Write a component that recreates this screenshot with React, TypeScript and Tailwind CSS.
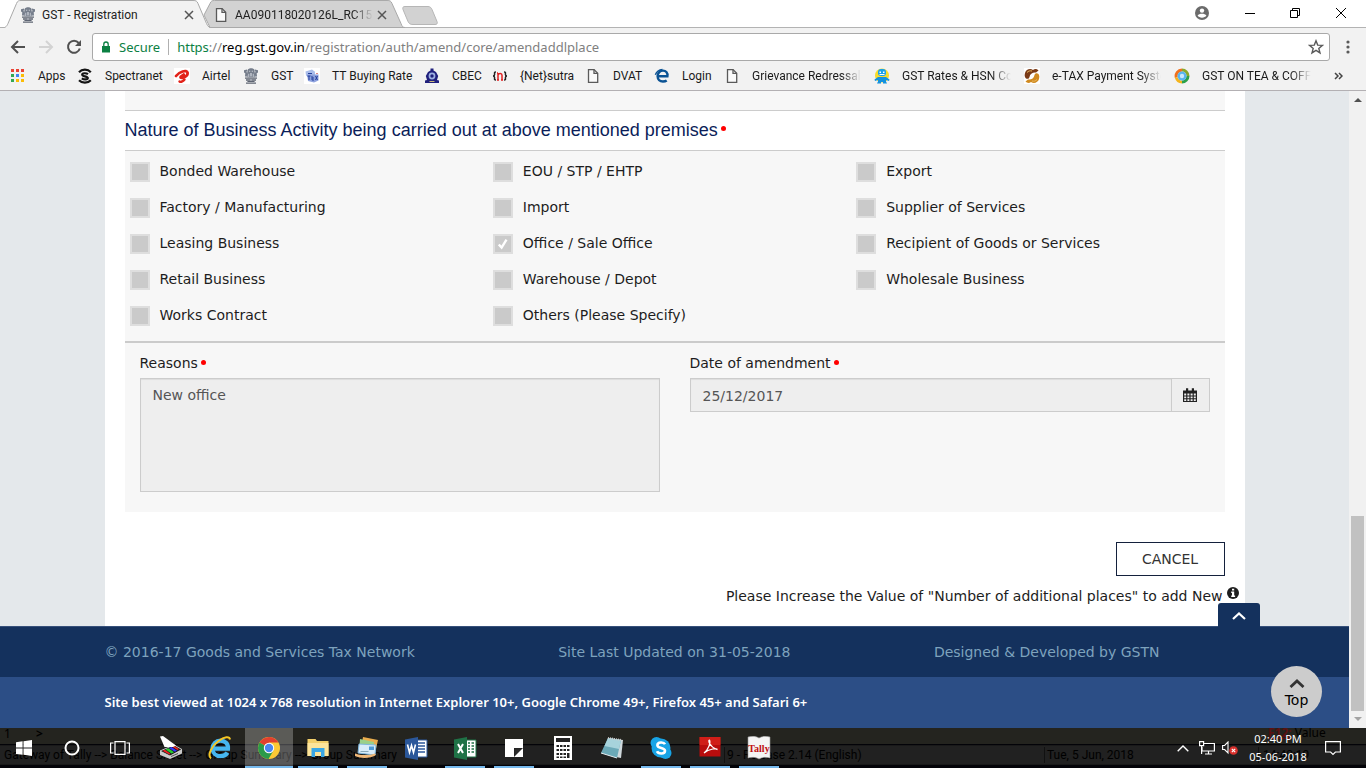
import type { ReactNode } from "react";

const Doc = () => (
  <svg viewBox="0 0 16 16" className="size-4 shrink-0" fill="none" stroke="#5a5a5a" strokeWidth="1.3">
    <path d="M3.5 1.6h5.6l3.6 3.6v9.2H3.5z" fill="#fafafa" />
    <path d="M9 1.6v3.8h3.7" />
  </svg>
);

const Emblem = () => (
  <svg viewBox="0 0 16 16" className="size-4 shrink-0" fill="#757d8b">
    <path d="M5 1.2 7 .3h2.2l2 .9.5 1.6-.6 1.4 1 2-.4 3H4.4L4 6.3l1-2-.7-1.4z" />
    <path d="M1 2.2l3-.8.2 2L5 5 3.4 9 2 8.2l.3-3L1 4.5zM15 2.2l-3-.8-.2 2L11 5l1.6 4 1.4-.8-.3-3 1.3-.7z" />
    <path d="M2 9.4h12v1.4H2zM3 11.2h10v1.6H3zM4.4 13.1h7.2v1H4.4zM3 14.4h10v1.4H3z" fill="#5d6472" />
    <path d="M6.2 2.7h1v1h-1zM8.8 2.7h1v1h-1zM7.4 5h1.2v3.4H7.4zM5.4 5.8h.8V9h-.8zM9.8 5.8h.8V9h-.8zM3 3.4h.8v.8H3zM12.2 3.4h.8v.8h-.8zM7.3 11.5h1.4v1H7.3z" fill="#d6dae2" />
  </svg>
);

const Apps = () => (
  <svg viewBox="0 0 16 16" className="size-4 shrink-0">
    <path d="M1 1h3v3H1zM6 1h3v3H6zM11 1h3v3h-3z" fill="#ea4335" />
    <path d="M1 6h3v3H1zM1 11h3v3H1z" fill="#34a853" />
    <path d="M6 6h3v3H6z" fill="#4285f4" />
    <path d="M11 6h3v3h-3zM6 11h3v3H6zM11 11h3v3h-3z" fill="#fbbc05" />
  </svg>
);

const Spectranet = () => (
  <svg viewBox="0 0 16 16" className="size-4 shrink-0" fill="none" stroke="#151515" strokeWidth="2.2">
    <path d="M2 4.2C5 .8 10.800.8 13.800 4.200M13.800 12.200c-3 3.200-8.800 3.200-11.800 0" />
    <path d="M11 6.200C9 4.700 5.200 5 5.200 6.700S10.800 8.300 10.800 10s-3.800 1.900-6 .3" strokeWidth="2.200" />
  </svg>
);

const Airtel = () => (
  <svg viewBox="0 0 16 16" className="size-4 shrink-0" fill="none" stroke="#e2231a" strokeLinecap="round">
    <path d="M0 0h16v16H0z" fill="#fff" stroke="none" />
    <path d="M2 8C5 4 12.800 1 13.600 4.800 14.200 9 6.500 11 6.500 9.200 6.600 8 9 7.800 9.800 6.600" strokeWidth="2.800" />
    <path d="M5.500 13.500c1.500 1 4-.5 5-2" strokeWidth="2.400" />
  </svg>
);

const Rate = () => (
  <svg viewBox="0 0 16 16" className="size-4 shrink-0">
    <path d="M0 0h16v16H0z" fill="#fff" />
    <path d="M1.500 3.500 8 1.500l3 2.300v4L4.500 9.500 2 7.500z" fill="#a9bdea" />
    <path d="M3 6.500h11.500v6L10 14.500l-6-1.500z" fill="#8ea2de" />
    <path d="M4 5.500h4M5 8v4M3.500 8h3M8 8v4h2M8 10h2M11.500 8l2 4M13.500 8l-2 4" stroke="#24409c" strokeWidth="1" fill="none" />
    <path d="M12 5.500h2" stroke="#d88" />
  </svg>
);

const Cbec = () => (
  <svg viewBox="0 0 16 16" className="size-4 shrink-0">
    <path d="M6.500.5h3v2l2.500 1.500 2.200 4L13 12l2 .5v2.500H1v-2.500l2-.5-1.200-4L4 4l2.500-1.500z" fill="#20207c" />
    <circle cx="8" cy="8" r="3.400" fill="#9db0e2" />
    <circle cx="8" cy="8" r="1.700" fill="#20207c" />
    <path d="M5.500 13.500h5" stroke="#c9b87c" />
  </svg>
);

const NetSutra = () => (
  <svg viewBox="0 0 16 16" className="size-4 shrink-0" fill="none" strokeWidth="1.500">
    <path d="M4 4c-2 0-1.400 1-1.400 2.200C2.600 7.500 2 8 1 8c1 0 1.600.5 1.600 1.800 0 1.200-.6 2.200 1.400 2.200M12 4c2 0 1.400 1 1.400 2.200C13.400 7.500 14 8 15 8c-1 0-1.600.5-1.600 1.800 0 1.200.6 2.200-1.400 2.200" stroke="#222" />
    <path d="M6 12V5M6 7c.8-2 4-2 4 .3V12M5 12h2M9 12h2M5 5h1" stroke="#e02020" />
  </svg>
);

const EdgeE = () => (
  <svg viewBox="0 0 16 16" className="size-4 shrink-0" fill="none" stroke="#0b5394" strokeWidth="2.400">
    <path d="M4 8.300h9.400C14 4.500 11.600 2.600 9 2.600c-3 0-5.400 2.400-5.400 5.700 0 3.200 2.300 5.200 5.300 5.200 1.600 0 3-.4 3.800-1" />
    <path d="M1.300 6.800C2.500 3.600 5 1.800 8.500 1.500" strokeWidth="1.300" />
  </svg>
);

const Robot = () => (
  <svg viewBox="0 0 16 16" className="size-4 shrink-0">
    <circle cx="8" cy="7.500" r="7" fill="#f8dc2c" />
    <rect x="4" y="1" width="8" height="7" rx="3" fill="#19a0e8" />
    <path d="M4 9h8l3.500 2.500L15 13l-3-1v1.500l1 2H9V14H7v1.500H3l1-2V12l-3 1-.5-1.500z" fill="#1492de" />
    <path d="M5.500 3.500h1.500v1.500H5.500zM9 3.500h1.500v1.500H9zM5.500 6h5v1h-5z" fill="#fff" />
  </svg>
);

const Swirl = () => (
  <svg viewBox="0 0 16 16" className="size-4 shrink-0">
    <path d="M0 0h16v16H0z" fill="#fff" />
    <path d="M1 5C2 1.500 6 0 9 2c2-1.500 4-1 5.500.5L12 4.500C9 4 6 5.500 5.500 9 5 11 3 11.500 1.500 10 .5 8.500.5 7 1 5z" fill="#7a3a16" />
    <path d="M15 11c-1 3.500-5 5-8 3-2 1.500-4 1-5.500-.5L4 11.500c3 .5 6-1 6.500-4.500C11 5 13 4.500 14.500 6c1 1.500 1 3 .5 5z" fill="#d08a20" />
    <path d="M3 4.500C4.500 3 6 2.500 8 3M13 11.500c-1.500 1.500-3 2-5 1.500" fill="none" stroke="#e8b860" />
  </svg>
);

const Ring = () => (
  <svg viewBox="0 0 16 16" className="size-4 shrink-0" fill="none" strokeWidth="3">
    <path d="M2.300 9.500A6 6 0 0 1 8 2" stroke="#f0701c" />
    <path d="M8 2a6 6 0 0 1 6 6" stroke="#8aa82c" />
    <path d="M14 8a6 6 0 0 1-6 6" stroke="#2ca04a" />
    <path d="M8 14a6 6 0 0 1-5.700-4.500" stroke="#f4b41c" />
    <circle cx="8" cy="8" r="4.500" fill="#58b4ee" />
    <circle cx="8" cy="8" r="2.200" fill="#c8e8fc" />
  </svg>
);

const bookmarks: { label: string; icon: ReactNode; fade?: boolean; w: string }[] = [
  { label: "Apps", icon: <Apps />, w: "w-[67px]" },
  { label: "Spectranet", icon: <Spectranet />, w: "w-[97px]" },
  { label: "Airtel", icon: <Airtel />, w: "w-[69px]" },
  { label: "GST", icon: <Emblem />, w: "w-[61px]" },
  { label: "TT Buying Rate", icon: <Rate />, w: "w-[120px]" },
  { label: "CBEC", icon: <Cbec />, w: "w-[68px]" },
  { label: "{Net}sutra", icon: <NetSutra />, w: "w-[93px]" },
  { label: "DVAT", icon: <Doc />, w: "w-[69px]" },
  { label: "Login", icon: <EdgeE />, w: "w-[70px]" },
  { label: "Grievance Redressal", icon: <Doc />, fade: true, w: "w-[150px]" },
  { label: "GST Rates & HSN Co", icon: <Robot />, fade: true, w: "w-[150px]" },
  { label: "e-TAX Payment Syste", icon: <Swirl />, fade: true, w: "w-[150px]" },
  { label: "GST ON TEA & COFF", icon: <Ring />, fade: true, w: "w-[150px]" },
];

function Close() {
  return (
    <svg viewBox="0 0 10 10" className="size-2.5 shrink-0" stroke="#555" strokeWidth="1.500">
      <path d="M1 1l8 8M9 1L1 9" />
    </svg>
  );
}

function TabStrip() {
  return (
    <div className="relative flex h-7 items-start bg-white font-['Roboto',sans-serif] text-xs text-[#222]">
      <div className="absolute inset-x-0 bottom-0 h-px bg-[#b3b3b3]" />
      <div className="relative z-10 h-7 w-[214px]">
        <svg viewBox="0 0 214 28" className="absolute inset-0 h-7 w-[214px]">
          <path d="M0 28.500C5 28 6.500 27 8 23.500L16.500 3.500C17.500 1 18.500.5 21 .5H193c3 0 4 .5 5 3l8.500 20c1.500 3.500 3 4.500 7 5z" fill="#f2f2f2" stroke="#a9a9a9" />
        </svg>
        <div className="relative flex h-7 items-center pt-0.5 pl-5">
          <Emblem />
          <span className="ml-1.5 flex-1">GST - Registration</span>
          <button aria-label="Close tab" className="mr-5"><Close /></button>
        </div>
      </div>
      <div className="relative -ml-3 h-7 w-[206px]">
        <svg viewBox="0 0 206 28" className="absolute inset-0 h-7 w-[206px]">
          <path d="M2 15 8 3.500C9 1 10 .5 12.500 .5H185c3 0 4 .5 5 3l9 20c1 3 2 4 4 4H8z" fill="#d2d2d2" stroke="#a9a9a9" />
        </svg>
        <div className="relative flex h-7 items-center pt-0.5 pl-[11px]">
          <Doc />
          <span className="ml-1.5 w-[138px] whitespace-nowrap [mask-image:linear-gradient(to_right,#000_85%,transparent)]">AA090118020126L_RC150</span>
          <button aria-label="Close tab" className="ml-1"><Close /></button>
        </div>
      </div>
      <button aria-label="New tab" className="-ml-1.5 mt-1.5 h-[19px] w-9">
        <svg viewBox="0 0 36 19" className="h-[19px] w-9">
          <path d="M3 .5h23c2 0 3 1 4 3l5 12c.8 2 0 3-2 3H11c-3 0-4-1-5-3L1 3.500C.3 1.500 1 .5 3 .5z" fill="#d2d2d2" stroke="#b6b6b6" />
        </svg>
      </button>
      <div className="mr-0.5 ml-auto flex h-[26px] items-center text-black">
        <button aria-label="Profile" className="grid w-[52px] place-items-center">
          <svg viewBox="0 0 14 14" className="size-3.5">
            <circle cx="7" cy="7" r="7" fill="#6b6b6b" />
            <circle cx="7" cy="4.600" r="2.200" fill="#fff" />
            <path d="M2.600 9.600c1.400-2.400 7.400-2.400 8.800 0-1.600 2.800-7.200 2.800-8.800 0z" fill="#fff" />
          </svg>
        </button>
        <button aria-label="Minimize" className="grid w-11 place-items-center"><svg viewBox="0 0 10 10" className="size-2.5" stroke="#000"><path d="M0 5.500h10" /></svg></button>
        <button aria-label="Restore" className="grid w-[46px] place-items-center"><svg viewBox="0 0 10 10" className="size-2.5" stroke="#000" fill="none"><path d="M.5 2.500h7v7h-7zM2.500 2.500v-2h7v7h-2" /></svg></button>
        <button aria-label="Close" className="grid w-[46px] place-items-center"><svg viewBox="0 0 10 10" className="size-2.5" stroke="#000"><path d="M0 0l10 10M10 0L0 10" /></svg></button>
      </div>
    </div>
  );
}

function Toolbar() {
  return (
    <div className="flex h-[38px] items-center bg-[#f2f2f2] font-['Noto_Sans',sans-serif]">
      <div className="flex w-[92px] shrink-0 items-center justify-between px-2.5">
        <button aria-label="Back"><svg viewBox="0 0 16 16" className="size-4" fill="none" stroke="#505050" strokeWidth="2"><path d="M15 8H2.500M8 2 2 8l6 6" /></svg></button>
        <button aria-label="Forward" disabled><svg viewBox="0 0 16 16" className="size-4" fill="none" stroke="#d3d3d3" strokeWidth="2"><path d="M1 8h12.500M8 2l6 6-6 6" /></svg></button>
        <button aria-label="Reload"><svg viewBox="0 0 16 16" className="size-4" fill="none" stroke="#505050" strokeWidth="2"><path d="M12.700 4A6 6 0 1 0 13.800 9.500" /><path d="M15 1v6H9z" fill="#505050" stroke="none" /></svg></button>
      </div>
      <div className="flex h-7 flex-1 items-center rounded-[3px] border border-[#a9a9a9] bg-white pl-2">
        <svg viewBox="0 0 10 12" className="h-3 w-2.5"><path d="M1 5h8v6.500H1z" fill="#0b8043" /><path d="M2.800 5V3.200a2.200 2.200 0 0 1 4.400 0V5" fill="none" stroke="#0b8043" strokeWidth="1.300" /></svg>
        <span className="ml-2 text-[13px] leading-5 text-[#0b8043]">Secure</span>
        <span className="mx-2 h-4 w-px bg-[#b0b0b0]" />
        <span className="grid flex-1 text-[13px] leading-5">
          <input aria-label="Address" readOnly value="https://reg.gst.gov.in/registration/auth/amend/core/amendaddlplace" className="col-start-1 row-start-1 h-5 w-full text-transparent outline-none" />
          <span aria-hidden="true" className="pointer-events-none col-start-1 row-start-1 whitespace-nowrap text-[#808080]">
            <span className="text-[#0b8043]">https</span>://<span className="text-black">reg.gst.gov.in</span>/registration/auth/amend/core/amendaddlplace
          </span>
        </span>
        <button aria-label="Bookmark this page" className="mr-[5px]"><svg viewBox="0 0 16 16" className="size-4" fill="none" stroke="#5a5a5a" strokeWidth="1.400"><path d="M8 1.800l1.700 4.300 4.700.3-3.600 3 1.200 4.500L8 11.400l-4 2.500 1.200-4.500-3.600-3 4.700-.3z" /></svg></button>
      </div>
      <button aria-label="Menu" className="grid w-9 shrink-0 place-items-center"><svg viewBox="0 0 4 14" className="h-3.5 w-1" fill="#5a5a5a"><circle cx="2" cy="2" r="1.600" /><circle cx="2" cy="7" r="1.600" /><circle cx="2" cy="12" r="1.600" /></svg></button>
    </div>
  );
}

function Bookmarks() {
  return (
    <nav aria-label="Bookmarks" className="flex h-[25px] items-center border-b border-[#b3b0b3] bg-[#f2f2f2] pb-1 pl-2.5 font-['Roboto',sans-serif] text-xs text-[#1a1a1a]">
      {bookmarks.map((b) => (
        <a key={b.label} href="#" className={`flex shrink-0 items-center gap-3 ${b.w}`}>
          {b.icon}
          <span className={b.fade ? "w-[109px] whitespace-nowrap [mask-image:linear-gradient(to_right,#000_82%,transparent)]" : "whitespace-nowrap"}>{b.label}</span>
        </a>
      ))}
      <button aria-label="More bookmarks" className="mr-[23px] ml-auto">
        <svg viewBox="0 0 9 8" className="h-2 w-[9px]" fill="none" stroke="#444" strokeWidth="1.500"><path d="M1 1l3 3-3 3M5 1l3 3-3 3" /></svg>
      </button>
    </nav>
  );
}

const activities: { label: string; on?: boolean }[] = [
  { label: "Bonded Warehouse" }, { label: "EOU / STP / EHTP" }, { label: "Export" },
  { label: "Factory / Manufacturing" }, { label: "Import" }, { label: "Supplier of Services" },
  { label: "Leasing Business" }, { label: "Office / Sale Office", on: true }, { label: "Recipient of Goods or Services" },
  { label: "Retail Business" }, { label: "Warehouse / Depot" }, { label: "Wholesale Business" },
  { label: "Works Contract" }, { label: "Others (Please Specify)" },
];

const Required = () => <span aria-label="required" className="mb-1 ml-[3px] inline-block size-[5px] rounded-full bg-[#f00] align-middle" />;

function Form() {
  return (
    <main className="mx-auto w-full max-w-[1140px] flex-1 bg-white px-5">
      <div className="h-[19px] bg-[#f7f7f7]" />
      <h4 className="flex h-10 items-center border-t border-[#ccc] pb-0.5 font-['Liberation_Sans',Arial,sans-serif] text-lg text-[#0b1e59]">
        <span>Nature of Business Activity being carried out at above mentioned premises<Required /></span>
      </h4>
      <div className="grid grid-cols-3 border-t border-b-2 border-t-[#ccc] border-b-[#cbcbcb] bg-[#f7f7f7] px-[5px] pt-0.5 pb-2">
        {activities.map((a) => (
          <label key={a.label} className="flex h-9 items-center gap-2.5">
            <span className="mt-0.5 grid size-5 shrink-0 place-items-center">
              <input type="checkbox" disabled defaultChecked={a.on} className="peer col-start-1 row-start-1 size-5 appearance-none border-2 border-[#dedede] bg-[#cacaca]" />
              <svg viewBox="0 0 12 12" className="pointer-events-none invisible col-start-1 row-start-1 size-3 peer-checked:visible" fill="none" stroke="#fff" strokeWidth="2.400"><path d="M1.800 6.500 4.600 9.600 9.500 1.600" /></svg>
            </span>
            <span>{a.label}</span>
          </label>
        ))}
      </div>
      <div className="grid grid-cols-2 gap-[30px] bg-[#f7f7f7] px-[15px] pt-2.5 pb-5">
        <div className="flex flex-col">
          <label htmlFor="reasons" className="h-[25px] leading-5">Reasons<Required /></label>
          <textarea id="reasons" disabled defaultValue="New office" className="h-[114px] w-full resize-none border border-[#ccc] bg-[#eee] px-3 py-1.5 leading-5 text-[#555] shadow-[inset_0_1px_1px_rgba(0,0,0,0.075)]" />
        </div>
        <div className="flex flex-col">
          <label htmlFor="date" className="h-[25px] leading-5">Date of amendment<Required /></label>
          <div className="flex h-[34px] border border-[#ccc] bg-[#eee]">
            <input id="date" disabled defaultValue="25/12/2017" className="min-w-0 flex-1 border-r border-[#ccc] px-3 pt-0.5 text-[#555] shadow-[inset_0_1px_1px_rgba(0,0,0,0.075)]" />
            <button aria-label="Choose date" className="grid w-[37px] place-items-center">
              <svg viewBox="0 0 14 14" className="size-3.5">
                <path d="M0 2.500h14V14H0z" fill="#222" />
                <path d="M3 .3h2.200v3H3zM8.800.3H11v3H8.800z" fill="#222" />
                <path d="M1.200 5.500h2v2h-2zM4.400 5.500h2v2h-2zM7.600 5.500h2v2h-2zM10.800 5.500h2v2h-2zM1.200 8.500h2v1.800h-2zM4.400 8.500h2v1.800h-2zM7.600 8.500h2v1.800h-2zM10.800 8.500h2v1.800h-2zM1.200 11.300h2v1.600h-2zM4.400 11.300h2v1.600h-2zM7.600 11.300h2v1.600h-2zM10.800 11.300h2v1.600h-2z" fill="#eee" />
              </svg>
            </button>
          </div>
        </div>
      </div>
      <div className="flex justify-end pt-[30px]">
        <button className="h-[34px] w-[109px] border border-[#14213d] bg-white text-[#333]">CANCEL</button>
      </div>
      <p className="-mr-3.5 flex h-10 justify-end gap-1 pt-2.5 leading-5">
        Please Increase the Value of "Number of additional places" to add New
        <svg viewBox="0 0 12 12" className="mt-px size-3"><circle cx="6" cy="6" r="6" fill="#1d1d1d" /><path d="M5 1.800h2.200v1.800H5zM4.200 4.600h3v4h.9V10H4.200V8.600H5V6h-.8z" fill="#fff" /></svg>
      </p>
    </main>
  );
}

function Footer() {
  return (
    <footer className="relative w-full text-[#7ea3bd]">
      <button aria-label="Collapse footer" className="absolute -top-[23px] right-[89px] grid h-6 w-[42px] place-items-center rounded-t-[3px] bg-[#14315d] pt-0.5">
        <svg viewBox="0 0 14 8" className="h-2 w-3.5" fill="none" stroke="#fff" strokeWidth="2.200"><path d="M1 7l6-5.500L13 7" /></svg>
      </button>
      <div className="border-t border-[#36507a] bg-[#14315d]">
        <div className="mx-auto flex h-[50px] max-w-[1140px] items-center justify-between pr-[85px]">
          <span>© 2016-17 Goods and Services Tax Network</span>
          <span>Site Last Updated on 31-05-2018</span>
          <span>Designed &amp; Developed by GSTN</span>
        </div>
      </div>
      <div className="bg-[#2c4e86]">
        <p className="mx-auto flex h-[51px] max-w-[1140px] items-center font-['Noto_Sans',sans-serif] text-[13px] font-semibold text-white">
          Site best viewed at 1024 x 768 resolution in Internet Explorer 10+, Google Chrome 49+, Firefox 45+ and Safari 6+
        </p>
      </div>
      <a href="#" className="absolute right-[27px] bottom-[11px] flex size-[51px] flex-col items-center justify-center gap-1 rounded-full bg-[#ccc] pt-1 leading-4 text-black">
        <svg viewBox="0 0 16 9" className="h-[9px] w-4" fill="none" stroke="#333" strokeWidth="2.800"><path d="M1.500 8 8 2l6.500 6" /></svg>
        Top
      </a>
    </footer>
  );
}

const taskIcons: { name: string; open?: boolean; active?: boolean; art: ReactNode }[] = [
  { name: "Scanner", art: <><path d="M1 15 15 9l8 4.500v4L11 23 1 19z" fill="#c9c9c9" /><path d="M1 15l14-6 8 4.500L11 20z" fill="#1b1b1b" stroke="#ddd" strokeWidth=".8" /><path d="M3.500 14.800 6 13.700l5.500 4-1.200.7z" fill="#e22" /><path d="M6.500 13.500 9.500 12.200l5.500 4-2.500 1.200z" fill="#2c3" /><path d="M10 12 12.500 11l5.500 3.700-2.200 1z" fill="#33f" /><path d="M13.200 10.700 15 10l5 3-1.500 1z" fill="#e22" /><path d="M1 .5 4 0l13 9.500-3 1.500H5.500z" fill="#fff" /><path d="M12 20.500l7-3" stroke="#555" /></> },
  { name: "Internet Explorer", art: <><path d="M5.500 12.600h14.500c.4-5-3-8-7.500-8-4.600 0-8 3.400-8 8 0 4.500 3.400 7.600 8 7.600 3 0 5.600-1.200 7-3.500" fill="none" stroke="#46b6f0" strokeWidth="4.200" /><path d="M3 22.500C-1 19 4 9.500 10.500 5 16.500.6 21.500 0 22 3.500" fill="none" stroke="#f6c623" strokeWidth="2" /></> },
  { name: "Chrome", active: true, open: true, art: <><circle cx="12" cy="12" r="11" fill="#fcc934" /><path d="M12 12 2.500 6.500a11 11 0 0 1 19-.1H12z" fill="#e0402f" /><path d="M2.500 6.500A11 11 0 0 0 11.500 23l5-8.500L12 12z" fill="#2a9a4a" /><circle cx="12" cy="12" r="5.200" fill="#fff" /><circle cx="12" cy="12" r="4.200" fill="#4a86f0" /></> },
  { name: "File Explorer", open: true, art: <><path d="M1.500 3h8l1.500 2h11.500v15h-21z" fill="#f3cf6a" /><path d="M1.500 7h21v13h-21z" fill="#fde49a" /><path d="M5.500 12h13v9h-3.500v-5h-6v5H5.500z" fill="#3ba7e4" /></> },
  { name: "Mail", open: true, art: <><path d="M8 1l15 3-3 13L6 13z" fill="#e9ad4e" /><path d="M5 3l14 3-1 12-14-1z" fill="#9ad08a" /><path d="M4 8l17 1-1 10-17-2z" fill="#d8ecfa" stroke="#7fb6dc" /><path d="M14 10.500h5v3.500h-5z" fill="#4e9ad6" /><path d="M5.500 15.500h8" stroke="#8ab" /><path d="M0 17.500c6 2 14 2 20 0l1 1.500c-5 3.500-15 4-21 1z" fill="#f0b878" /></> },
  { name: "Word", art: <><path d="M12 4h11v17H12z" fill="#fff" stroke="#2b579a" /><path d="M14 7h7M14 10h7M14 13h7M14 16h7" stroke="#2b579a" strokeWidth="1.300" /><path d="M1 3.500 14 1v23L1 21.500z" fill="#2b579a" /><path d="M3.500 8.500l2 8 2-7 2 7 2-8" fill="none" stroke="#fff" strokeWidth="1.600" /></> },
  { name: "Excel", open: true, art: <><path d="M12 4h11v17H12z" fill="#fff" stroke="#1f7246" /><path d="M15 7h2M18.500 7h2.500M15 10h2M18.500 10h2.500M15 13h2M18.500 13h2.500M15 16h2M18.500 16h2.500" stroke="#1f7246" strokeWidth="1.600" /><path d="M1 3.500 14 1v23L1 21.500z" fill="#1f7246" /><path d="M5 8l5 9M10 8l-5 9" fill="none" stroke="#fff" strokeWidth="2" /></> },
  { name: "Sticky Notes", open: true, art: <><path d="M3 3h18v9h-9v9H3z" fill="#fff" /><path d="M12.500 12.500H21L12.500 21z" fill="#2a2a2a" /><path d="M21 12v9h-9z" fill="#fff" /></> },
  { name: "Calculator", art: <><path d="M3 0h18v24H3z" fill="#fff" /><path d="M5 2h14v4H5z" fill="#222" /><path d="M5.500 9h2.500v2H5.500zM9 9h2.500v2H9zM12.500 9H15v2h-2.500zM16 9h2.500v2H16zM5.500 13h2.500v2H5.500zM9 13h2.500v2H9zM12.500 13H15v2h-2.500zM16 13h2.500v2H16zM5.500 17h2.500v2H5.500zM9 17h2.500v2H9zM12.500 17H15v2h-2.500zM16 17h2.500v5H16zM5.500 20.500h2.500v1.500H5.500zM9 20.500h2.500v1.500H9zM12.500 20.500H15v1.500h-2.500z" fill="#222" /></> },
  { name: "Notepad", art: <><path d="M9 2l14 2-2 18-5-1z" fill="#cfd8dc" /><path d="M8 2l13 2-4 18L1 17z" fill="#6ba9b8" /><path d="M8 2l13 2-2 9L4.500 10z" fill="#a7d3dc" /><path d="M1 17l16 5" stroke="#e8eef2" /><path d="M8 2l13 2" stroke="#ccc" strokeWidth="2" strokeDasharray="1 1" /></> },
  { name: "Skype", open: true, art: <><circle cx="12" cy="12" r="9.500" fill="#18a4e6" /><circle cx="7.500" cy="7" r="6" fill="#18a4e6" /><circle cx="16.500" cy="17" r="6" fill="#18a4e6" /><path d="M16 8.300C14.800 5.800 8.400 5.800 8.400 9.200c0 3.600 7.600 2 7.600 5.600 0 3.600-6.800 3.500-8 .5" fill="none" stroke="#fff" strokeWidth="2.600" /></> },
  { name: "Acrobat Reader", open: true, art: <><path d="M1.500 1h21v19.500h-21z" fill="#b80d0d" /><path d="M1.500 1h21v8h-21z" fill="#e02a20" opacity=".6" /><path d="M6 17c4-3 7-10 5.500-13-1.800 0 0 7 7.500 9.500 1-1.500-8-1-13 3.500z" fill="none" stroke="#fff" strokeWidth="1.200" /></> },
];

function Taskbar() {
  return (
    <div className="relative flex h-10 w-full shrink-0 items-stretch overflow-hidden bg-[#222] font-['Noto_Sans',sans-serif] text-[11px] text-white">
      <div aria-hidden="true" className="absolute inset-0 flex flex-col bg-[#030308] text-xs text-black">
        <div className="flex h-4 bg-[#24241f] pl-1 leading-3"><span className="w-8">1</span><b>&gt;</b><span className="ml-auto w-[98px] leading-[10px]"><b className="text-[#5c1010] underline">F12:</b> Value</span></div>
        <div className="mt-px flex h-5 items-center border-y border-[#191919] bg-[#212121] pl-1 font-['Roboto',sans-serif] text-xs">
          <span className="flex-1">Gateway of Tally --&gt; Balance Sheet --&gt; Group Summary --&gt; Group Summary</span>
          <span className="w-80 border-l border-[#111] pl-0.5">9 - Release 2.14 (English)</span>
          <span className="w-[214px] border-l border-[#111] pl-0.5">Tue, 5 Jun, 2018</span>
          <span className="w-[108px] border-l border-[#111] pl-1">14:40:19</span>
        </div>
      </div>
      <button aria-label="Start" className="relative grid w-12 place-items-center"><svg viewBox="0 0 16 16" className="size-4" fill="#fff"><path d="M0 2.200 6.600 1.300v6.300H0zM7.500 1.200 16 0v7.600H7.500zM0 8.500h6.600v6.300L0 13.900zM7.500 8.500H16V16l-8.500-1.200z" /></svg></button>
      <button aria-label="Search" className="relative grid w-12 place-items-center"><svg viewBox="0 0 16 16" className="size-4" fill="none" stroke="#fff" strokeWidth="2"><circle cx="8" cy="8" r="6.500" /></svg></button>
      <button aria-label="Task view" className="relative grid w-12 place-items-center"><svg viewBox="0 0 20 14" className="h-3.5 w-5" fill="none" stroke="#fff" strokeWidth="1.200"><path d="M5 .6h10v12.800H5zM3.500 2H.6v10h2.900M16.500 2h2.900v10h-2.900" /></svg></button>
      <div className="relative ml-[3px] flex gap-px">
        {taskIcons.map((t) => (
          <button key={t.name} aria-label={t.name} className={`flex w-12 flex-col items-center justify-between pt-2 ${t.active ? "bg-white/25" : ""}`}>
            <svg viewBox="0 0 24 24" className="size-6">{t.art}</svg>
            {t.open && <span className={`h-0.5 bg-[#76b9ed] ${t.active ? "w-12" : "w-10"}`} />}
          </button>
        ))}
        <button aria-label="Tally" className="flex w-12 flex-col items-center justify-between pt-2">
          <svg viewBox="0 0 24 24" className="size-6">
            <path d="M1 1c4-1 8-1 11 1 3-2 7-2 11-1v21c-4-1-8-1-11 1-3-2-7-2-11-1z" fill="#f4f4f4" stroke="#999" strokeWidth=".6" />
            <text x="12" y="16" textAnchor="middle" fontFamily="Liberation Serif" fontWeight="700" fontSize="10" fill="#c01010">Tally</text>
          </svg>
          <span className="h-0.5 w-10 bg-[#76b9ed]" />
        </button>
      </div>
      <div className="relative ml-auto flex items-center">
        <button aria-label="Show hidden icons" className="mr-2.5"><svg viewBox="0 0 12 7" className="h-[7px] w-3" fill="none" stroke="#fff" strokeWidth="1.400"><path d="M.7 6.300 6 1l5.300 5.300" /></svg></button>
        <button aria-label="Network" className="mr-[7px]"><svg viewBox="0 0 16 14" className="h-3.5 w-4" fill="none" stroke="#fff" strokeWidth="1.200"><path d="M5 2.500h10.400v7.500H3V6M9.500 10v3M6 13h7M.6.600h4v4h-4zM2.600 4.600V13" /></svg></button>
        <button aria-label="Volume muted" className="mr-2.5"><svg viewBox="0 0 16 14" className="h-3.5 w-4" fill="none" stroke="#fff" strokeWidth="1.100"><path d="M.6 4.500h2L6 1v11L2.600 8.500h-2z" /><circle cx="11.500" cy="9.500" r="4.300" fill="#d9302c" stroke="none" /><path d="M9.800 7.800l3.400 3.400M13.200 7.800l-3.400 3.400" /></svg></button>
        <div className="w-[60px] text-center leading-[18px] whitespace-nowrap"><div>02:40 PM</div><div>05-06-2018</div></div>
        <button aria-label="Notifications" className="mr-[25px] ml-[17px]"><svg viewBox="0 0 16 16" className="size-4" fill="none" stroke="#fff" strokeWidth="1.200"><path d="M.6 1.600h14.800v10.400h-5L8 14.500 5.600 12h-5z" /></svg></button>
      </div>
    </div>
  );
}

function Scrollbar() {
  return (
    <div aria-hidden="true" className="flex w-[17px] shrink-0 flex-col items-center justify-between bg-[#f1f1f1] py-[7px]">
      <svg viewBox="0 0 8 4" className="h-1 w-2" fill="#505050"><path d="M0 4 4 0l4 4z" /></svg>
      <div className="flex w-[13px] flex-1 flex-col justify-end pb-1.5"><div className="h-[32%] bg-[#c1c1c1]" /></div>
      <svg viewBox="0 0 8 4" className="h-1 w-2" fill="#a3a3a3"><path d="M0 0l4 4 4-4z" /></svg>
    </div>
  );
}

export default function App() {
  return (
    <div className="flex min-h-screen flex-col bg-white">
      <header>
        <TabStrip />
        <Toolbar />
        <Bookmarks />
      </header>
      <div className="flex flex-1">
        <div className="flex flex-1 flex-col bg-[#e4e8eb] font-['DejaVu_Sans',Verdana,sans-serif] text-sm text-[#1d1d1d]">
          <Form />
          <Footer />
        </div>
        <Scrollbar />
      </div>
      <Taskbar />
    </div>
  );
}
